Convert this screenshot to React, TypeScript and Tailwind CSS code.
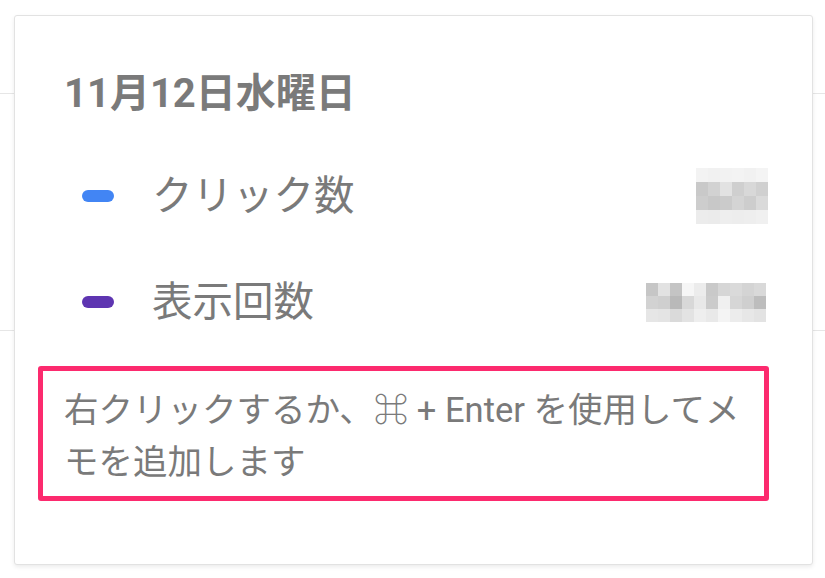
const clickCells = [
  ["#f3f3f3", "#f1f1f1", "#f2f2f2", "#f3f3f3", "#f1f1f1", "#f4f4f4"],
  ["#c9c9c9", "#d2d2d2", "#e2e2e2", "#cfcfcf", "#d8d8d8", "#d0d0d0"],
  ["#cdcdcd", "#c8c8c8", "#cbcbcb", "#d4d4d4", "#cdcdcd", "#dadada"],
  ["#ececec", "#ebebeb", "#eeeeee", "#ededed", "#eeeeee", "#f0f0f0"],
];

const impCells = [
  ["#c6c6c6", "#e2e2e2", "#c4c4c4", "#f6f6f6", "#ececec", "#c9c9c9", "#d6d6d6", "#dadada", "#d4d4d4", "#d9d9d9"],
  ["#d2d2d2", "#cfcfcf", "#b9b9b9", "#d8d8d8", "#e8e8e8", "#cbcbcb", "#f0f0f0", "#d6d6d6", "#cfcfcf", "#bdbdbd"],
  ["#e6e6e6", "#e4e4e4", "#dadada", "#e3e3e3", "#eeeeee", "#e9e9e9", "#f4f4f4", "#ececec", "#e7e7e7", "#e3e3e3"],
];

function Mosaic({ cells, cell }: { cells: string[][]; cell: string }) {
  return (
    <div className="flex flex-col">
      {cells.map((row, i) => (
        <div key={i} className="flex">
          {row.map((c, j) => (
            <div key={j} className={cell} style={{ backgroundColor: c }} />
          ))}
        </div>
      ))}
    </div>
  );
}

function Row({ color, label, children }: { color: string; label: string; children: React.ReactNode }) {
  return (
    <div className="flex h-[106px] items-center justify-between">
      <div className="flex items-center pl-[44px]">
        <span className={`h-[12px] w-[32px] rounded-full ${color}`} />
        <span className="ml-[38px] text-[40.5px] leading-[48px] text-[#7a7a7a]">{label}</span>
      </div>
      {children}
    </div>
  );
}

export default function App() {
  return (
    <div
      className="relative h-[578px] w-[825px] overflow-hidden bg-white pl-[14px] pt-[15px]"
      style={{ fontFamily: "Roboto, 'Noto Sans CJK JP', sans-serif" }}
    >
      {/* chart grid lines behind the tooltip */}
      <div className="absolute left-0 right-0 top-[93px] h-px bg-[#e6e6e6]" />
      <div className="absolute left-0 right-0 top-[330px] h-px bg-[#e6e6e6]" />

      <div className="relative flex h-[550px] w-[799px] flex-col rounded-[3px] border border-[#e2e2e2] bg-white pl-[23px] pr-[44px] pt-[54px] shadow-[0_2px_4px_rgba(0,0,0,0.08)]">
        <div className="pl-[26px] text-[40px] font-bold leading-[48px] text-[#7a7a7a]">11月12日水曜日</div>

        <div className="mt-[25px] flex flex-col">
          <Row color="bg-[#4285f4]" label="クリック数">
            <Mosaic cells={clickCells} cell="h-[14px] w-[12px]" />
          </Row>
          <Row color="bg-[#5e35b1]" label="表示回数">
            <div className="mr-[2px]">
              <Mosaic cells={impCells} cell="h-[13px] w-[12px]" />
            </div>
          </Row>
        </div>

        <div className="mt-[11px] w-[731px] rounded-[3px] border-[5px] border-[#fc2a6e] pb-[8px] pl-[21px] pr-[6px] pt-[13px] text-[34.5px] leading-[52px] text-[#7a7a7a]">
          右クリックするか、⌘ + Enter を使用してメ
          <br />
          モを追加します
        </div>
      </div>
    </div>
  );
}
